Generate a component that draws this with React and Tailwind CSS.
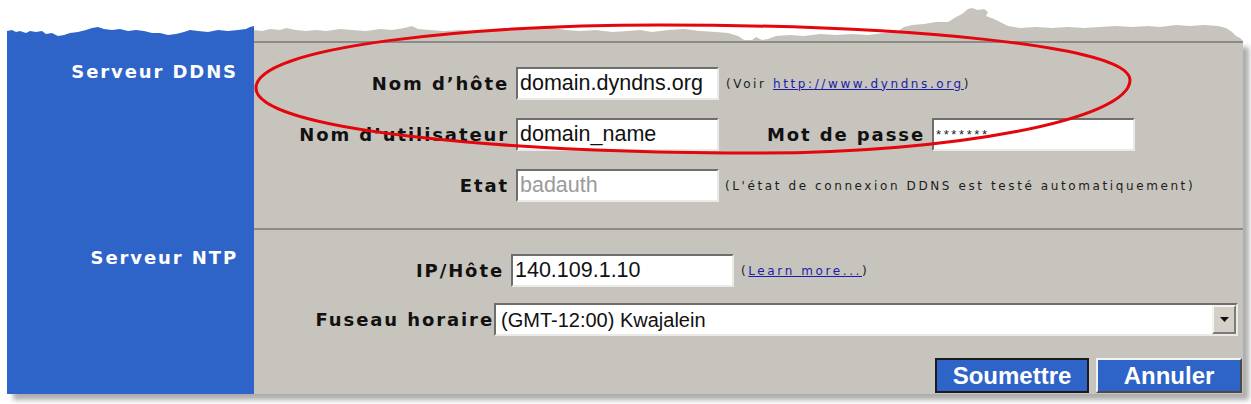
import React from "react";

const labelFont = { fontFamily: '"DejaVu Sans", Verdana, sans-serif' };
const fieldFont = { fontFamily: '"Liberation Sans", Arial, sans-serif' };

function Field({ value, width, muted, small }) {
  return (
    <input
      readOnly
      value={value}
      style={fieldFont}
      className={`h-[33px] ${width} bg-white border-2 border-t-[#6e6e6e] border-l-[#6e6e6e] border-b-[#eceae6] border-r-[#eceae6] pl-[2px] outline-none ${
        small ? "text-[13px] tracking-[2.6px] text-[#222]" : "text-[21.5px]"
      } ${muted ? "text-[#9b9b9b]" : "text-[#111]"}`}
    />
  );
}

function Label({ children, width }) {
  return (
    <div
      style={labelFont}
      className={`${width} text-right text-[18px] font-bold tracking-[1.9px] text-[#111] leading-5`}
    >
      {children}
    </div>
  );
}

function Hint({ children, className = "" }) {
  return (
    <span
      style={labelFont}
      className={`text-[12px] tracking-[2.6px] text-[#1c1c1c] whitespace-nowrap ${className}`}
    >
      {children}
    </span>
  );
}

export default function App() {
  return (
    <div className="relative w-[1251px] h-[404px] bg-white overflow-hidden">
      <div className="ml-[7px] mt-[41px] w-[1236px] h-[353px] flex shadow-[6px_6px_5px_rgba(0,0,0,0.32)]">
        {/* left blue column */}
        <div
          style={labelFont}
          className="w-[247px] bg-[#2e63c8] flex flex-col text-right pr-[16px] text-white text-[18px] font-bold tracking-[1.9px] leading-5"
        >
          <div className="h-[187px] pt-[21px]">Serveur DDNS</div>
          <div className="pt-[20px]">Serveur NTP</div>
        </div>

        {/* gray form area */}
        <div className="flex-1 bg-[#c7c4be] border-t-2 border-[#8d8b87] flex flex-col">
          <div className="h-[185px] pt-[24px] flex flex-col gap-[18px]">
            <div className="flex items-center h-[33px]">
              <Label width="w-[255px]">Nom d’hôte</Label>
              <div className="ml-[7px]">
                <Field value="domain.dyndns.org" width="w-[203px]" />
              </div>
              <Hint className="ml-[7px]">
                (Voir{" "}
                <a href="#" className="text-[#1c1ca8] underline">
                  http://www.dyndns.org
                </a>
                )
              </Hint>
            </div>
            <div className="flex items-center h-[33px]">
              <Label width="w-[255px]">Nom d’utilisateur</Label>
              <div className="ml-[7px]">
                <Field value="domain_name" width="w-[203px]" />
              </div>
              <Label width="w-[206px]">Mot de passe</Label>
              <div className="ml-[7px]">
                <Field value="*******" width="w-[203px]" small />
              </div>
            </div>
            <div className="flex items-center h-[33px]">
              <Label width="w-[255px]">Etat</Label>
              <div className="ml-[7px]">
                <Field value="badauth" width="w-[203px]" muted />
              </div>
              <Hint className="ml-[6px]">
                (L'état de connexion DDNS est testé automatiquement)
              </Hint>
            </div>
          </div>

          <div className="flex-1 border-t-2 border-[#8d8b87] pt-[24px] flex flex-col">
            <div className="flex items-center h-[33px]">
              <Label width="w-[250px]">IP/Hôte</Label>
              <div className="ml-[7px]">
                <Field value="140.109.1.10" width="w-[223px]" />
              </div>
              <Hint className="ml-[7px]">
                (
                <a href="#" className="text-[#1c1ca8] underline">
                  Learn more...
                </a>
                )
              </Hint>
            </div>
            <div className="flex items-center h-[33px] mt-[16px]">
              <Label width="w-[240px]">Fuseau horaire</Label>
              <div className="w-[744px] h-[33px] bg-white border-2 border-t-[#6e6e6e] border-l-[#6e6e6e] border-b-[#eceae6] border-r-[#eceae6] flex items-center">
                <span style={fieldFont} className="flex-1 pl-[5px] text-[20px] text-[#111]">
                  (GMT-12:00) Kwajalein
                </span>
                <div className="w-[24px] h-full bg-[#d4d0c8] border-2 border-t-[#f4f3f0] border-l-[#f4f3f0] border-b-[#7d7b77] border-r-[#7d7b77] flex items-center justify-center">
                  <svg width="9" height="5" viewBox="0 0 9 5">
                    <path d="M0 0 H9 L4.5 5 Z" fill="#111" />
                  </svg>
                </div>
              </div>
            </div>
            <div className="flex justify-end gap-[7px] mt-[22px] pr-[1px]">
              <button
                style={fieldFont}
                className="w-[154px] h-[35px] bg-[#2e63c8] border-2 border-[#1c1c1c] text-white text-[24px] font-bold leading-none"
              >
                Soumettre
              </button>
              <button
                style={fieldFont}
                className="w-[146px] h-[35px] bg-[#2e63c8] border-2 border-t-[#f2f2f2] border-l-[#f2f2f2] border-b-[#4a4a4a] border-r-[#4a4a4a] text-white text-[24px] font-bold leading-none"
              >
                Annuler
              </button>
            </div>
          </div>
        </div>
      </div>

      {/* torn paper edge */}
      <svg className="absolute top-0 left-0 pointer-events-none" width="1251" height="44" viewBox="0 0 1251 44">
        <polygon
          fill="#2e63c8"
          points="7,42 7,31 12,30 16,32 20,31 26,33 30,31 36,32 42,31 46,34 52,33 58,36 64,35 70,33 78,32 86,30 92,28 98,27 104,29 112,30 120,29 128,31 136,30 144,31 152,33 160,33 168,35 176,34 184,32 190,30 198,31 208,32 218,30 228,31 238,30 246,29 250,27 254,26 254,42"
        />
        <polygon
          fill="#c7c4be"
          points="254,41 254,30 262,31 270,29 280,30 286,28 296,30 306,31 316,30 326,31 340,29 352,30 366,31 380,29 392,30 404,28 412,26 418,29 430,30 444,31 460,30 476,31 492,29 506,28 520,30 536,29 552,28 566,30 580,31 596,30 612,32 628,31 640,30 652,32 668,30 684,29 700,31 716,32 728,33 738,36 744,40 752,40 756,37 762,40 768,39 776,36 790,35 804,36 820,34 836,35 852,34 868,35 884,33 898,31 904,27 912,25 924,24 936,22 948,22 956,17 962,14 968,9 972,8 978,10 984,9 988,12 986,16 994,19 1000,22 1008,26 1020,28 1036,27 1052,28 1068,27 1084,28 1100,27 1116,26 1132,27 1148,26 1160,27 1176,25 1190,26 1204,25 1218,26 1226,28 1232,32 1236,36 1240,38 1243,41"
        />
      </svg>

      {/* red hand-drawn annotation */}
      <svg className="absolute top-0 left-0 pointer-events-none" width="1251" height="404" viewBox="0 0 1251 404">
        <path
          d="M256 88 C256 45 480 25 660 25 C900 25 1130 45 1130 80 C1130 120 950 153 760 153 C500 153 256 130 256 88 Z"
          fill="none"
          stroke="#e3060c"
          strokeWidth="3"
        />
      </svg>
    </div>
  );
}
